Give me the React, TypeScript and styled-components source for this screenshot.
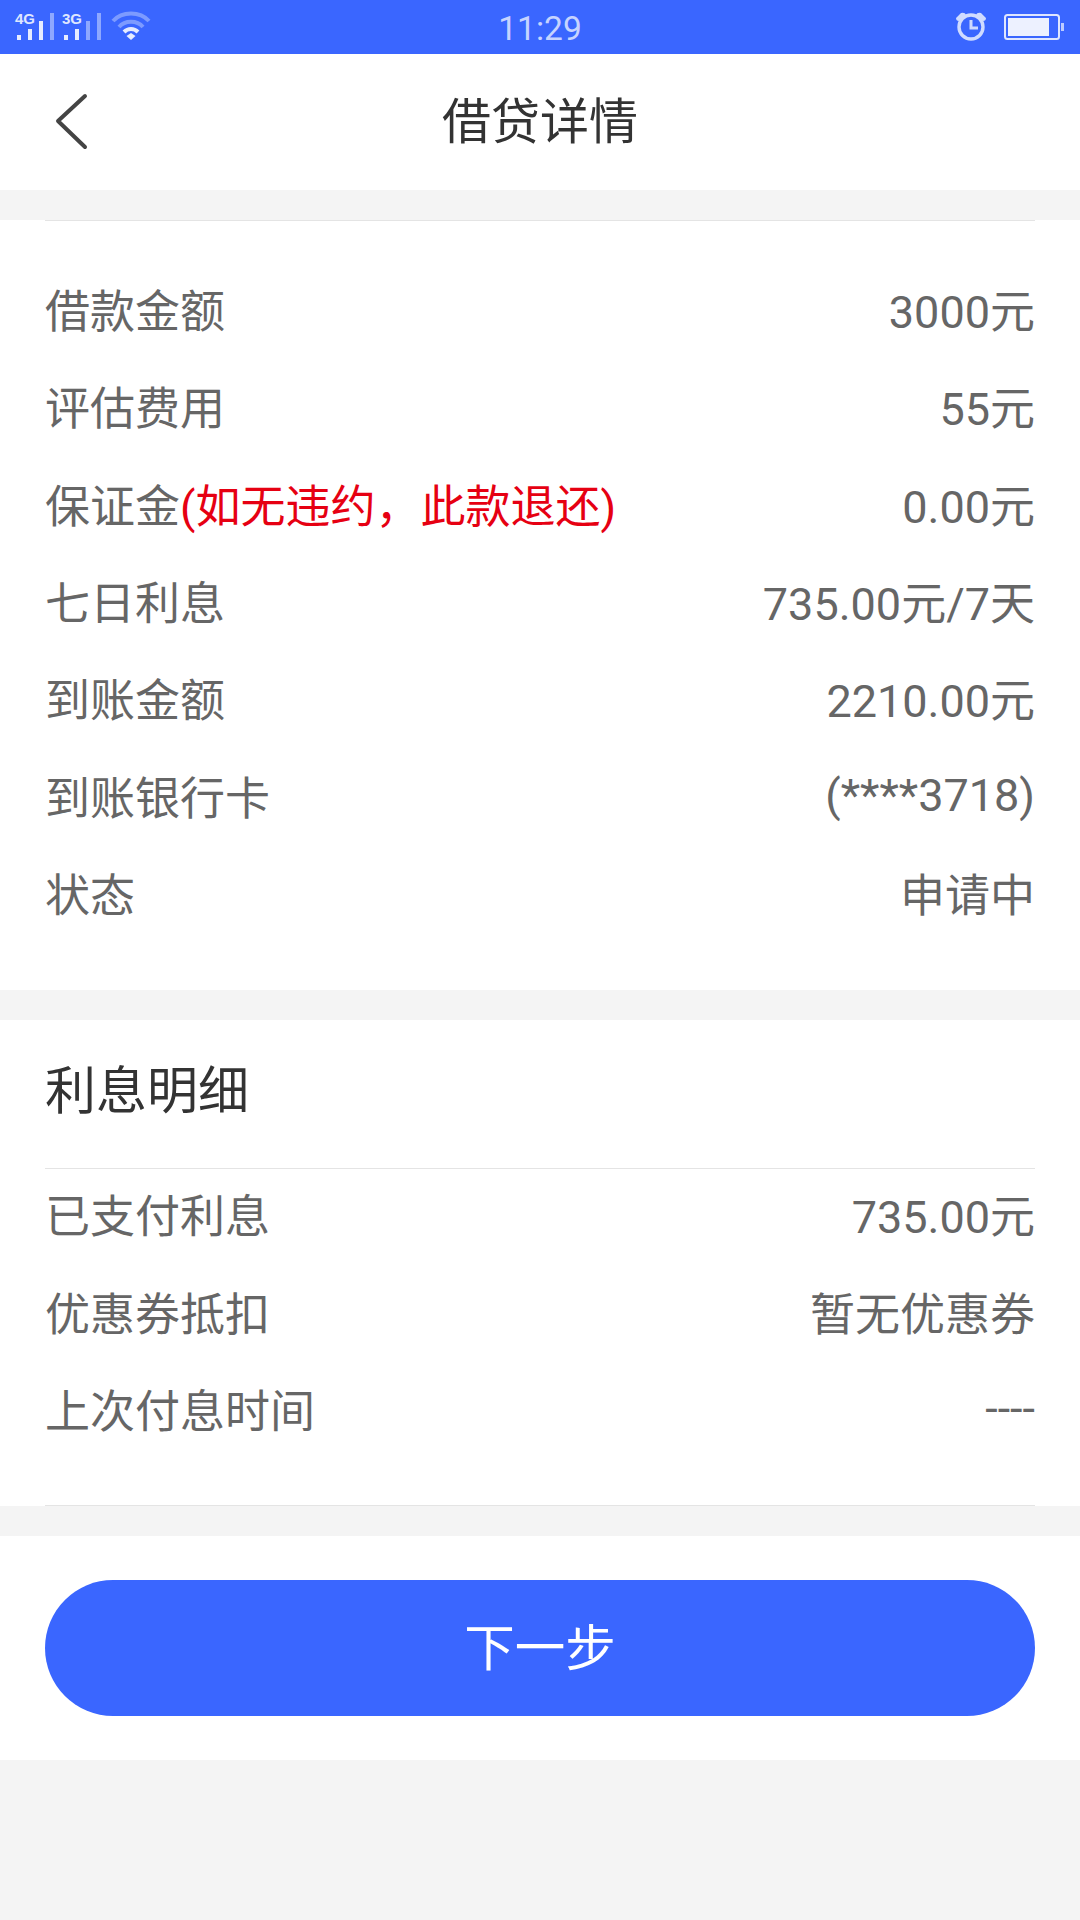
import React from 'react';
import styled, { createGlobalStyle } from 'styled-components';

const Global = createGlobalStyle`
  html, body { margin: 0; padding: 0; background: #f4f4f4; }
  body { font-family: Roboto, "Noto Sans CJK SC", sans-serif; }
`;

const Page = styled.div`
  width: 1080px;
  height: 1920px;
  overflow: hidden;
  background: #f4f4f4;
  display: flex;
  flex-direction: column;
`;

const StatusBar = styled.div`
  position: relative;
  height: 54px;
  flex: none;
  background: #3a66ff;
  display: flex;
  align-items: center;
  justify-content: space-between;
  padding: 0 14px;
`;

const StatusGroup = styled.div`
  display: flex;
  align-items: center;
`;

const Time = styled.div`
  position: absolute;
  left: 0;
  right: 0;
  top: 0;
  line-height: 58px;
  text-align: center;
  font-size: 33.5px;
  color: #c6d3ff;
`;

const SignalLabel = styled.text`
  font-family: "Liberation Sans", Arial, sans-serif;
  font-size: 15px;
  font-weight: 700;
  fill: #dfe6ff;
`;

const Header = styled.header`
  height: 136px;
  flex: none;
  background: #fff;
  position: relative;
  display: flex;
  align-items: center;
  justify-content: center;
`;

const BackIcon = styled.svg`
  position: absolute;
  left: 53px;
  top: 38px;
`;

const Title = styled.h1`
  margin: 0;
  font-size: 49px;
  font-weight: 400;
  color: #333;
  line-height: 1;
`;

const Section = styled.section<{ $top?: number; $bottom?: number }>`
  flex: none;
  background: #fff;
  padding: ${p => p.$top ?? 0}px 45px ${p => p.$bottom ?? 0}px;
`;

const TopRule = styled.div`
  height: 1px;
  background: #e4e4e4;
`;

const Rows = styled.div<{ $top: number; $bottom?: number }>`
  padding-top: ${p => p.$top}px;
  padding-bottom: ${p => p.$bottom ?? 0}px;
`;

const Row = styled.div`
  box-sizing: border-box;
  height: 97.3px;
  padding-bottom: 8px;
  display: flex;
  align-items: center;
  justify-content: space-between;
  font-size: 45px;
  color: #666;
`;

const Note = styled.span`
  color: #e60012;
`;

const SectionTitle = styled.h2`
  box-sizing: border-box;
  margin: 0;
  height: 148px;
  padding-bottom: 14px;
  display: flex;
  align-items: center;
  font-size: 51px;
  font-weight: 400;
  color: #333;
`;

const Gap = styled.div`
  height: 30px;
  flex: none;
`;

const ButtonArea = styled.div`
  flex: none;
  background: #fff;
  padding: 44px 45px;
`;

const NextButton = styled.button`
  display: block;
  width: 100%;
  height: 136px;
  border: 0;
  border-radius: 68px;
  background: #3a66ff;
  color: #fff;
  font-family: inherit;
  font-size: 50.5px;
  padding: 0 0 8px;
`;

const Signal = () => (
  <svg width="97" height="54" viewBox="0 0 97 54" style={{ display: 'block' }}>
    <SignalLabel x="1" y="24">4G</SignalLabel>
    <rect x="3" y="35" width="4" height="5" fill="#e6ecff" />
    <rect x="14" y="29" width="4" height="11" fill="#e6ecff" />
    <rect x="25" y="21" width="4" height="19" fill="#e6ecff" />
    <rect x="36" y="13" width="4" height="27" fill="#8ea8ff" />
    <SignalLabel x="48" y="24">3G</SignalLabel>
    <rect x="50" y="35" width="4" height="5" fill="#e6ecff" />
    <rect x="61" y="29" width="4" height="11" fill="#e6ecff" />
    <rect x="72" y="21" width="4" height="19" fill="#8ea8ff" />
    <rect x="83" y="13" width="4" height="27" fill="#8ea8ff" />
  </svg>
);

const Wifi = () => (
  <svg width="40" height="54" viewBox="0 0 40 54" style={{ display: 'block' }}>
    <path d="M2 21 C11 11 29 11 38 21" stroke="#7d9bff" strokeWidth="4" fill="none" />
    <path d="M8 27 C14 20 26 20 32 27" stroke="#7d9bff" strokeWidth="4" fill="none" />
    <path d="M13 32 C17 28 23 28 27 32" stroke="#e6ecff" strokeWidth="4" fill="none" />
    <path d="M15.5 36 L20 33 L24.5 36 L20 40 Z" fill="#e6ecff" />
  </svg>
);

const Alarm = () => (
  <svg width="30" height="54" viewBox="0 0 30 54" style={{ display: 'block' }}>
    <circle cx="15" cy="27" r="12" stroke="#cfdbff" strokeWidth="3.4" fill="none" />
    <path d="M15 20 V28 H22" stroke="#cfdbff" strokeWidth="3" fill="none" />
    <path d="M0 18 L5 13 Q9 12 10 15 L3 21 Q0 21 0 18 Z M30 18 L25 13 Q21 12 20 15 L27 21 Q30 21 30 18 Z" fill="#cfdbff" />
  </svg>
);

const Battery = () => (
  <svg width="62" height="54" viewBox="0 0 62 54" style={{ display: 'block', marginLeft: 18 }}>
    <rect x="1" y="15" width="54" height="24" rx="2.5" stroke="#dfe6ff" strokeWidth="2" fill="none" />
    <rect x="4" y="18" width="41" height="18" fill="#edf1ff" />
    <rect x="57" y="23" width="3" height="8" fill="#bccbff" />
  </svg>
);

const rowsA: [React.ReactNode, string][] = [
  ['借款金额', '3000元'],
  ['评估费用', '55元'],
  [<>保证金<Note>(如无违约，此款退还)</Note></>, '0.00元'],
  ['七日利息', '735.00元/7天'],
  ['到账金额', '2210.00元'],
  ['到账银行卡', '(****3718)'],
  ['状态', '申请中'],
];

const rowsB: [string, string][] = [
  ['已支付利息', '735.00元'],
  ['优惠券抵扣', '暂无优惠券'],
  ['上次付息时间', '----'],
];

export default function App() {
  return (
    <Page>
      <Global />
      <StatusBar>
        <StatusGroup>
          <Signal />
          <Wifi />
        </StatusGroup>
        <Time>11:29</Time>
        <StatusGroup>
          <Alarm />
          <Battery />
        </StatusGroup>
      </StatusBar>
      <Header>
        <BackIcon width="36" height="60" viewBox="0 0 36 60" fill="none">
          <path d="M32 4 L5 29 L32 55" stroke="#444" strokeWidth="4" strokeLinecap="round" strokeLinejoin="round" />
        </BackIcon>
        <Title>借贷详情</Title>
      </Header>
      <Gap />
      <Section $bottom={45}>
        <TopRule />
        <Rows $top={43}>
          {rowsA.map(([label, value], i) => (
            <Row key={i}><span>{label}</span><span>{value}</span></Row>
          ))}
        </Rows>
      </Section>
      <Gap />
      <Section>
        <SectionTitle>利息明细</SectionTitle>
        <TopRule />
        <Rows $top={0} $bottom={44}>
          {rowsB.map(([label, value]) => (
            <Row key={label}><span>{label}</span><span>{value}</span></Row>
          ))}
        </Rows>
        <TopRule />
      </Section>
      <Gap />
      <ButtonArea>
        <NextButton>下一步</NextButton>
      </ButtonArea>
    </Page>
  );
}
